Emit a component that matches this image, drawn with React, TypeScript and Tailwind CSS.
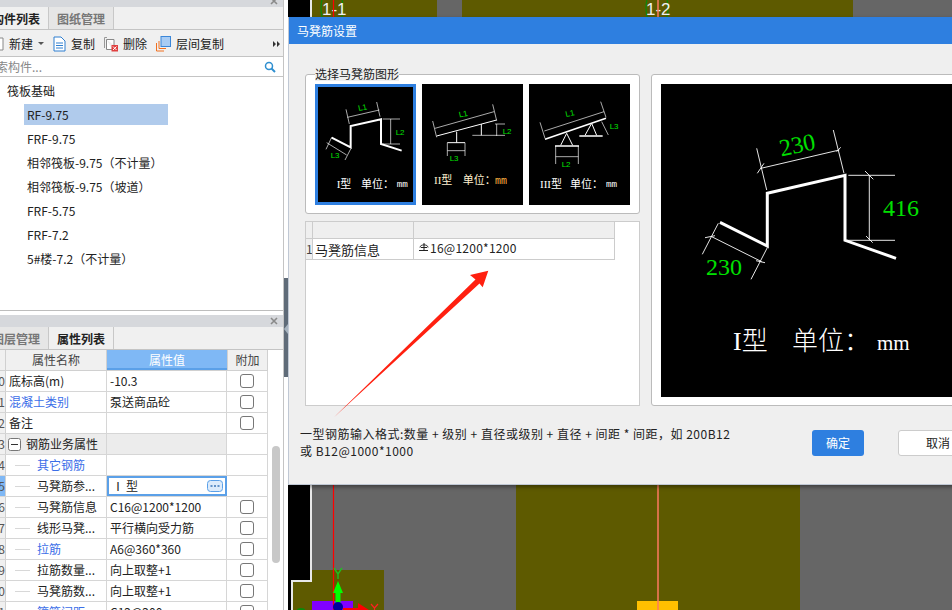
import React from 'react';

const rows = [
  { no: '20', name: '底标高(m)', value: '-10.3', check: true },
  { no: '21', name: '混凝土类别', value: '泵送商品砼', check: true, blue: true },
  { no: '22', name: '备注', value: '', check: true },
  { no: '23', name: '钢筋业务属性', value: '', group: true },
  { no: '24', name: '其它钢筋', value: '', child: true, blue: true },
  { no: '25', name: '马凳筋参...', value: 'Ⅰ型', child: true, editing: true },
  { no: '26', name: '马凳筋信息', value: 'C16@1200*1200', child: true, check: true },
  { no: '27', name: '线形马凳...', value: '平行横向受力筋', child: true, check: true },
  { no: '28', name: '拉筋', value: 'A6@360*360', child: true, check: true, blue: true },
  { no: '29', name: '拉筋数量...', value: '向上取整+1', child: true, check: true },
  { no: '30', name: '马凳筋数...', value: '向上取整+1', child: true, check: true },
  { no: '31', name: '箍筋间距', value: 'C12@200', child: true, check: true, blue: true },
];

const treeItems = ['RF-9.75', 'FRF-9.75', '相邻筏板-9.75（不计量）', '相邻筏板-9.75（坡道）', 'FRF-5.75', 'FRF-7.2', '5#楼-7.2（不计量）'];

const CloseX = () => (
  <svg width="8" height="8" viewBox="0 0 8 8" className="shrink-0">
    <path d="M1 1l6 6M7 1l-6 6" stroke="#8a8a8a" strokeWidth="1.6" />
  </svg>
);

const PanelTabs = ({ first, second, firstActive }: { first: string; second: string; firstActive: boolean }) => (
  <div className="flex h-[23px] shrink-0 border-b border-[#c4c4c4] bg-[#f0f0f0]">
    <div className={`flex w-[49px] justify-end overflow-hidden whitespace-nowrap border-r border-[#c8c8c8] pr-[8px] pt-[2px] text-[12px] leading-[20px] ${firstActive ? 'bg-[#f0f0f0] font-bold text-[#222]' : 'bg-[#e6e6e6] font-bold text-[#777]'}`}>
      {first}
    </div>
    <div className={`flex w-[65px] justify-center border-r border-[#c8c8c8] pt-[2px] text-[12px] font-bold leading-[20px] ${firstActive ? 'bg-[#e6e6e6] text-[#777]' : 'bg-[#f0f0f0] text-[#222]'}`}>
      {second}
    </div>
  </div>
);

const Checkbox = () => <div className="h-[14px] w-[14px] rounded-[3px] border border-[#777] bg-white" />;

const Thumb1 = () => (
  <svg viewBox="54 81 285 345" className="h-full w-full">
    <rect x="54" y="81" width="285" height="345" fill="#000" />
    <g fill="none" stroke="#fff" strokeWidth="2">
      <path d="M142 172L238 150M138 148L148 192M230 126L240 170M248 177H300M248 252H300M272 177V252M78 268L95 232M135 300L153 265M80 248L140 285" />
    </g>
    <path d="M95 233L152 262V198L243 178V252L305 272" fill="none" stroke="#fff" strokeWidth="6" />
    <g fill="#00e000" fontFamily="Liberation Sans" fontSize="24">
      <text x="174" y="150" transform="rotate(-12 190 142)">L1</text>
      <text x="287" y="224">L2</text>
      <text x="92" y="293">L3</text>
    </g>
    <g fill="#fff" fontSize="33" fontFamily="Liberation Serif, Noto Sans CJK SC">
      <text x="110" y="384">I型</text>
      <text x="183" y="384">单位：</text>
      <text x="290" y="382" fontSize="28" fontFamily="Liberation Mono">mm</text>
    </g>
  </svg>
);

const Thumb2 = () => (
  <svg viewBox="366 72 303 363" className="h-full w-full">
    <rect x="366" y="72" width="303" height="363" fill="#000" />
    <g fill="none" stroke="#fff" strokeWidth="2">
      <path d="M405 205L582 155M398 183L410 232M578 133L590 182M442 272H495M442 248V288M495 248V288M590 192V228M585 192H615M517 226H615" />
    </g>
    <path d="M410 228L590 180M470 215V248M442 248H495M544 192V226" fill="none" stroke="#fff" strokeWidth="3" />
    <g fill="#00e000" fontFamily="Liberation Sans" fontSize="24">
      <text x="476" y="170" transform="rotate(-12 490 160)">L1</text>
      <text x="608" y="222">L2</text>
      <text x="449" y="302">L3</text>
    </g>
    <g fill="#fff0d0" fontSize="33" fontFamily="Liberation Serif, Noto Sans CJK SC">
      <text x="402" y="373">II型</text>
      <text x="488" y="373">单位：</text>
      <text x="585" y="371" fontSize="30" fontFamily="Liberation Mono" fill="#ffb040">mm</text>
    </g>
  </svg>
);

const Thumb3 = () => (
  <svg viewBox="687 72 303 363" className="h-full w-full">
    <rect x="687" y="72" width="303" height="363" fill="#000" />
    <g fill="none" stroke="#fff" strokeWidth="2">
      <path d="M733 213L912 155M720 187L735 235M902 125L918 172M767 258V312M835 258V312M767 290H835M905 185L925 225" />
    </g>
    <path d="M735 238L918 175M838 228H908M765 258H837" fill="none" stroke="#fff" strokeWidth="5" />
    <path d="M800 220L782 256M800 220L818 256M875 190L855 226M875 190L890 226" fill="none" stroke="#fff" strokeWidth="3" />
    <g fill="#00e000" fontFamily="Liberation Sans" fontSize="24">
      <text x="796" y="168" transform="rotate(-12 810 158)">L1</text>
      <text x="785" y="322">L2</text>
      <text x="929" y="206">L3</text>
    </g>
    <g fill="#fff" fontSize="33" fontFamily="Liberation Serif, Noto Sans CJK SC">
      <text x="720" y="383">III型</text>
      <text x="810" y="383">单位：</text>
      <text x="918" y="382" fontSize="28" fontFamily="Liberation Mono">mm</text>
    </g>
  </svg>
);

const BigPreview = () => (
  <svg viewBox="661 84 291 313" className="h-full w-full">
    <rect x="661" y="84" width="291" height="313" fill="#000" />
    <path
      d="M761 168.3L839.3 150M756.7 148.3L766.7 190M833.3 130L844 173.3M757.3 173.3L764 163.3M836.7 151.7L840.7 147.3M848.3 175.3H895M846.7 240.3H895M869.3 175.3V240.3M865 171L873.3 179.3M866 236L872.7 242.7M711.7 236.7L761.7 261.7M702.3 254.3L718.3 223.3M751 279.3L767.3 247.7M705 237.7L715 235.7M756 260.7L765 262.7"
      fill="none"
      stroke="#fff"
      strokeWidth="0.9"
    />
    <path d="M720 222.3L767.3 246V193.3L845 175.3V240.3L896 258.3" fill="none" stroke="#fff" strokeWidth="3" />
    <g fill="#00e000" fontFamily="Liberation Serif" fontSize="24">
      <text x="779" y="153" transform="rotate(-12 796.7 144)">230</text>
      <text x="706" y="275">230</text>
      <text x="883" y="216">416</text>
    </g>
    <g fill="#fff" fontSize="26" fontWeight="300" fontFamily="Liberation Serif, Noto Sans CJK SC">
      <text x="733" y="350">I型</text>
      <text x="792" y="350">单位：</text>
      <text x="877" y="350" fontSize="21">mm</text>
    </g>
  </svg>
);

const CanvasDrawing = () => (
  <svg viewBox="288 0 664 610" className="pointer-events-none absolute inset-0 h-full w-full">
    <ellipse cx="332" cy="8" rx="11" ry="20" fill="none" stroke="#0a8a0a" strokeWidth="1.2" />
    <ellipse cx="657" cy="8" rx="11" ry="20" fill="none" stroke="#0a8a0a" strokeWidth="1.2" />
    <g fill="#f0f0f0" fontFamily="Liberation Sans" fontSize="17">
      <text x="322" y="15">1-1</text>
      <text x="646" y="15">1-2</text>
    </g>
    <rect x="312" y="601" width="41" height="9" fill="#8000ff" />
    <rect x="637" y="601" width="41" height="9" fill="#ffc000" />
    <path d="M333.5 0V610" stroke="#ff0000" strokeWidth="1.2" />
    <path d="M658 0V610" stroke="#ff7a60" strokeWidth="1.5" />
    <ellipse cx="301" cy="610" rx="4" ry="2" fill="#0a8a0a" />
    <path d="M343 608H358V603L369 610H343Z" fill="#ff0000" />
    <path d="M371 604L374.5 608L378 604M374.5 608V610" fill="none" stroke="#ff2020" strokeWidth="1.2" />
    <path d="M338 581L343 593H340.5V604H335.5V593H333Z" fill="#00ff00" />
    <path d="M334 568L338 574L342 568M338 574V579" fill="none" stroke="#20c020" strokeWidth="1.4" />
    <circle cx="338" cy="607" r="5" fill="#0000a0" />
  </svg>
);

const App: React.FC = () => {
  return (
    <div className="flex h-[610px] w-[952px] overflow-hidden bg-white font-['Noto_Sans_CJK_SC','Noto_Sans',sans-serif] text-[12px] text-[#222]">
      {/* left column */}
      <div className="flex w-[284px] shrink-0 flex-col border-r border-[#c4c4c4]">
        <div className="flex h-[311px] shrink-0 flex-col border-b border-[#bdbdbd]">
          <div className="flex h-[7px] items-start justify-end overflow-hidden bg-[#d6d8dc] pr-[5px]">
            <div className="-mt-[3px]"><CloseX /></div>
          </div>
          <PanelTabs first="构件列表" second="图纸管理" firstActive />
          <div className="flex h-[27px] shrink-0 items-center border-b border-[#c4c4c4] bg-[#f0f0f0] pt-[2px]">
            <svg width="4" height="14" viewBox="0 0 4 14" className="shrink-0"><path d="M0 1H3V13H0" fill="#fff" stroke="#888" /></svg>
            <span className="ml-[5px]">新建</span>
            <svg width="6" height="4" viewBox="0 0 6 4" className="ml-[5px]"><path d="M0 0H6L3 3Z" fill="#555" /></svg>
            <svg width="13" height="16" viewBox="0 0 13 16" className="ml-[9px]"><path d="M1 1H8L12 5V15H1Z" fill="#fff" stroke="#2f7fd0" /><path d="M3 7H10M3 9.500H10M3 12H10" stroke="#2f7fd0" /></svg>
            <span className="ml-[5px]">复制</span>
            <svg width="14" height="15" viewBox="0 0 14 15" className="ml-[9px]"><path d="M3 .5H.5V11" fill="none" stroke="#999" /><path d="M2.500 2.500H10V8M8 12.500H2.500V2.500" fill="#fff" stroke="#888" /><rect x="7.500" y="8" width="6.500" height="6.500" fill="#e04040" /><path d="M9 9.500l3.500 3.500M12.500 9.500L9 13" stroke="#fff" /></svg>
            <span className="ml-[5px]">删除</span>
            <svg width="15" height="16" viewBox="0 0 15 16" className="ml-[9px]"><path d="M.5 7V15H8M3 5V12.500H10" fill="none" stroke="#f07020" /><rect x="5" y=".5" width="9.500" height="10" fill="#a8ccf4" stroke="#3a86d8" /></svg>
            <span className="ml-[5px]">层间复制</span>
            <svg width="7" height="6" viewBox="0 0 7 6" className="ml-auto mr-[3px]"><path d="M0 0L3 3L0 6ZM4 0L7 3L4 6Z" fill="#333" /></svg>
          </div>
          <div className="flex h-[20px] shrink-0 items-center justify-between overflow-hidden border-b border-[#c4c4c4] bg-white">
            <span className="-ml-[4px] whitespace-nowrap text-[#888]">索构件...</span>
            <svg width="12" height="12" viewBox="0 0 12 12" className="mr-[7px]"><circle cx="5" cy="5" r="3.500" fill="none" stroke="#2f8fd0" strokeWidth="1.500" /><path d="M7.500 7.500L11 11" stroke="#2f8fd0" strokeWidth="2" /></svg>
          </div>
          <div className="flex-1 pl-[7px] pt-[3px]">
            <div className="h-[24px] leading-[21px]">筏板基础</div>
            {treeItems.map((item, idx) => (
              <div key={item} className="ml-[17px] h-[24px]">
                <div className={`h-[21px] w-[144px] whitespace-nowrap pl-[3px] leading-[21px] ${idx === 0 ? 'bg-[#b0cbec]' : ''}`}>{item}</div>
              </div>
            ))}
          </div>
        </div>
        <div className="h-[4px] shrink-0" />
        <div className="flex min-h-0 flex-1 flex-col overflow-hidden">
          <div className="flex h-[12px] shrink-0 items-center justify-end bg-[#d6d8dc] pr-[5px]"><CloseX /></div>
          <PanelTabs first="图层管理" second="属性列表" firstActive={false} />
          <div className="flex min-h-0 flex-1">
            <div className="w-[268px] shrink-0">
              <div className="flex h-[21px] border-b border-[#d0d0d0] bg-[#f0f0f0] leading-[20px]">
                <div className="w-[6px] border-r border-[#d0d0d0]" />
                <div className="w-[101px] border-r border-[#d0d0d0] text-center text-[#444]">属性名称</div>
                <div className="w-[120px] border-b-2 border-[#5ba0e8] bg-[#7fb8f5] text-center text-white">属性值</div>
                <div className="w-[41px] border-r border-l border-[#d0d0d0] text-center text-[#444]">附加</div>
              </div>
              {rows.map((row) => (
                <div key={row.no} className="flex h-[21px] border-b border-[#d6d6d6] bg-white leading-[20px]">
                  <div className={`flex w-[6px] shrink-0 justify-end overflow-hidden border-r border-[#d0d0d0] text-[#555] ${row.editing ? 'bg-[#7fb8f5]' : 'bg-[#f0f0f0]'}`}>
                    <span>{row.no}</span>
                  </div>
                  <div className={`flex w-[101px] shrink-0 items-center overflow-hidden whitespace-nowrap border-r border-[#d6d6d6] ${row.group ? 'bg-[#ececec]' : ''} ${row.blue ? 'text-[#3b6ee8]' : ''}`}>
                    {row.group && (
                      <>
                        <svg width="13" height="13" viewBox="0 0 13 13" className="ml-[2px] mr-[5px] shrink-0"><rect x=".5" y=".5" width="12" height="12" rx="2" fill="#fff" stroke="#777" /><path d="M3 6.500H10" stroke="#333" /></svg>
                        {row.name}
                      </>
                    )}
                    {row.child && <div className="ml-[9px] mr-[7px] h-px w-[15px] shrink-0 bg-[#d8d8d8]" />}
                    {!row.group && !row.child && <span className="pl-[3px]">{row.name}</span>}
                    {row.child && <span>{row.name}</span>}
                  </div>
                  {row.editing ? (
                    <div className="flex w-[120px] shrink-0 items-center justify-between border-2 border-[#5ba0e8] pl-[3px] pr-[2px]">
                      <span className="tracking-[2px]">{row.value}</span>
                      <svg width="16" height="12" viewBox="0 0 16 12" className="shrink-0">
                        <rect x=".5" y=".5" width="15" height="11" rx="3" fill="#dcebfb" stroke="#5ba0e8" />
                        <path d="M3.500 6H5.500M7 6H9M10.500 6H12.500" stroke="#3a76b8" strokeWidth="1.500" />
                      </svg>
                    </div>
                  ) : (
                    <div className={`w-[120px] shrink-0 whitespace-nowrap border-r border-[#d6d6d6] pl-[3px] ${row.group ? 'bg-[#ececec]' : ''}`}>{row.value}</div>
                  )}
                  <div className="flex w-[41px] shrink-0 items-center justify-center border-r border-[#d6d6d6]">
                    {row.check && <Checkbox />}
                  </div>
                </div>
              ))}
            </div>
            <div className="flex-1 pl-[4px] pt-[96px]">
              <div className="h-[117px] w-[8px] rounded-[4px] bg-[#c8c8c8]" />
            </div>
          </div>
        </div>
      </div>

      {/* splitter */}
      <div className="flex w-[4px] shrink-0 flex-col">
        <div className="h-[278px] bg-white" />
        <div className="relative h-[99px] bg-[#5f6b78]">
          <div className="absolute left-0 top-[46px] h-0 w-0 border-y-[5px] border-r-[4px] border-y-transparent border-r-[#a8b4c0]" />
        </div>
        <div className="flex-1 bg-white" />
      </div>

      {/* drawing canvas with the dialog over it */}
      <div className="relative flex-1 overflow-hidden bg-[#666666]">
        <div className="absolute left-0 top-0 h-[580px] w-[22px] bg-black" />
        <div className="absolute left-0 top-[580px] h-[30px] w-[3px] bg-black" />
        <div className="absolute left-[22px] top-0 h-[581px] w-[2px] bg-[#e8e8e8]" />
        <div className="absolute left-[24px] top-0 h-[17px] w-[125px] bg-[#5e5a00]" />
        <div className="absolute left-[174px] top-0 h-[17px] w-[391px] bg-[#5e5a00]" />
        <div className="absolute left-[228px] top-[485px] h-[125px] w-[284px] bg-[#5e5a00]" />
        <div className="absolute left-[24px] top-[570px] h-[40px] w-[72px] bg-[#5e5a00]" />
        <div className="absolute left-[3px] top-[580px] h-[30px] w-[21px] border-l-2 border-t-2 border-[#e8e8e8] bg-[#5e5a00]" />
        <CanvasDrawing />

        <div className="absolute left-0 top-[17px] h-[468px] w-[700px] border-b border-l border-[#c0c8d4] bg-[#efefef] shadow-[0_2px_4px_rgba(0,0,0,0.4)]">
          <div className="flex h-[27px] items-center bg-[#2e7fe0] pl-[8px] text-white">马凳筋设置</div>
          <div className="flex pl-[16px] pt-[30px]">
            <div className="flex w-[335px] shrink-0 flex-col gap-[7px]">
              <div className="relative flex h-[140px] gap-[6px] rounded-[3px] border border-[#bbb] bg-white pl-[9px] pt-[9px]">
                <div className="absolute left-[9px] -top-[8px] bg-[#efefef] leading-[14px]">选择马凳筋图形</div>
                <div className="h-[121px] w-[101px] border-[3px] border-[#2e7fe0]"><Thumb1 /></div>
                <div className="h-[121px] w-[101px]"><Thumb2 /></div>
                <div className="h-[121px] w-[101px]"><Thumb3 /></div>
              </div>
              <div className="h-[185px] border border-[#ccc] bg-white">
                <div className="flex h-[17px] w-[309px] border-b border-[#ccc] bg-[#efefef]">
                  <div className="w-[7px] border-r border-[#ccc]" />
                  <div className="w-[101px] border-r border-[#ccc]" />
                  <div className="flex-1 border-r border-[#ccc]" />
                </div>
                <div className="flex h-[21px] w-[309px] border-b border-[#ccc]">
                  <div className="w-[7px] overflow-hidden border-r border-[#ccc] bg-[#efefef] leading-[20px] text-[#444]">1</div>
                  <div className="w-[101px] whitespace-nowrap border-r border-[#ccc] pl-[2px] text-[13px] leading-[22px]">马凳筋信息</div>
                  <div className="flex flex-1 items-center border-r border-[#ccc] pb-[3px] pl-[4px]">
                    <svg width="12" height="10" viewBox="0 0 12 10" className="mb-[2px] shrink-0">
                      <path d="M1 8.500H10M6 1V8.500M2 5.500C2 2 10 2 10 5.500M3 5.500H9" fill="none" stroke="#222" />
                    </svg>
                    <span className="tracking-[0.25px]">16@1200*1200</span>
                  </div>
                </div>
              </div>
            </div>
            <div className="ml-[11px] h-[332px] w-[320px] shrink-0 rounded-[3px] border border-[#bbb] bg-white p-[9px]">
              <div className="h-[313px] w-[291px]"><BigPreview /></div>
            </div>
          </div>
          <div className="flex pl-[11px] pr-[20px] pt-[19px]">
            <div className="w-[512px] shrink-0 leading-[17px] tracking-[0.5px]">
              一型钢筋输入格式:数量 + 级别 + 直径或级别 + 直径 + 间距 * 间距，如 200B12
              <br />
              或 B12@1000*1000
            </div>
            <div className="mt-[5px] flex h-[26px] w-[52px] shrink-0 items-center justify-center rounded-[3px] bg-[#2e7fe0] text-white">确定</div>
            <div className="ml-[34px] mt-[5px] flex h-[26px] w-[80px] shrink-0 items-center justify-center rounded-[3px] border border-[#ccc] bg-white">取消</div>
          </div>
        </div>

        {/* red annotation arrow */}
        <svg viewBox="288 0 664 610" className="pointer-events-none absolute inset-0 h-full w-full">
          <path d="M334 417.300L475.500 279.500L470 275L488.300 270.700L482.700 287.300L479.500 283.500Z" fill="#ff2010" />
        </svg>
      </div>
    </div>
  );
};

export default App;
